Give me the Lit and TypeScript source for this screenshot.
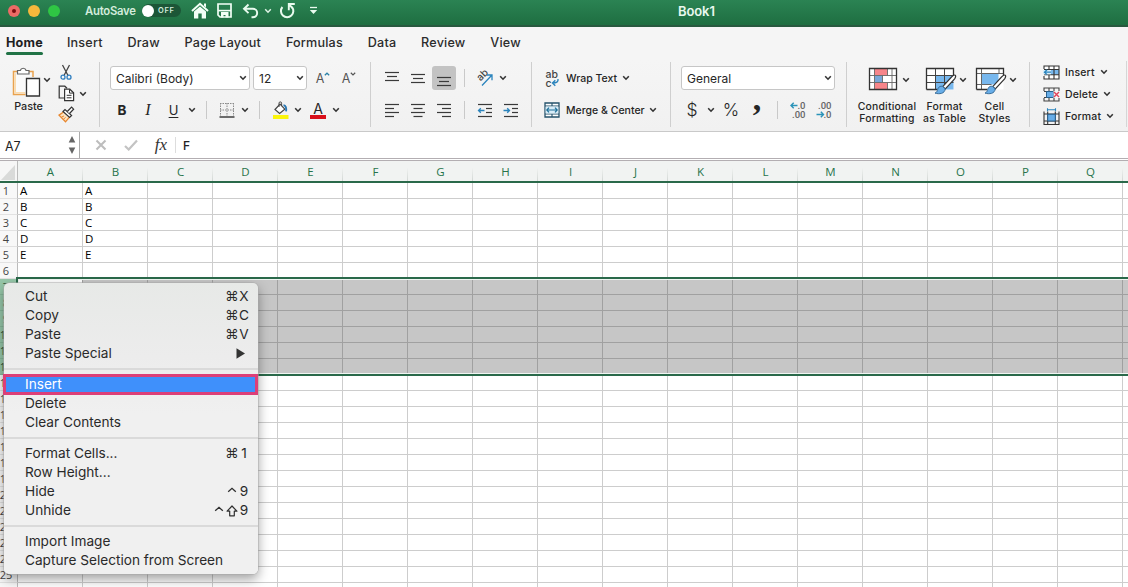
import { LitElement, html, css, svg, nothing } from "lit";
import { customElement, property } from "lit/decorators.js";
import { classMap } from "lit/directives/class-map.js";

const chev = html`<svg class="chev" width="8" height="6" viewBox="0 0 8 6"><path d="M1.2 1.3 4 4.2 6.8 1.3" fill="none" stroke="#333" stroke-width="1.6"/></svg>`;

const lines = (spec: [number, number, number][]) => svg`${spec.map(
  ([x1, x2, y]) => svg`<path d="M${x1} ${y}H${x2}" stroke="#3a3a3a" stroke-width="1.2"/>`
)}`;

const icon = (w: number, h: number, body: unknown) =>
  html`<svg width=${w} height=${h} viewBox="0 0 ${w} ${h}" fill="none">${body}</svg>`;

const brushTip = svg`<path d="M30.200 8.200c1 .8.500 2-.6 3.600L20.300 22l-2.600-2.400 8.800-9.600c1.400-1.400 2.800-2.400 3.700-1.800z" fill="#fff" stroke="#333" stroke-width="1.200"/><path d="M17.400 19.300c-4-.8-4.600 3-5.200 4.800-.4 1-1.300 1.700-2.200 2 4 1.300 10 .8 10.200-4.400z" fill="#67ade8" stroke="#3b6e99" stroke-width="1"/>`;

const icons = {
  home: icon(18, 17, svg`<path d="M1 9 9 1.8 17 9" stroke="#f2fff6" stroke-width="2"/><path d="M3 9.6 9 4.4l6 5.2V16.500h-4.300v-5H7.300v5H3z" fill="#f2fff6"/><path d="M13 1.500h2v4l-2-1.800z" fill="#f2fff6"/>`),
  save: icon(15, 15, svg`<path d="M1 1h13v13H3L1 12z" stroke="#f2fff6" stroke-width="1.700"/><path d="M1 7.600h13" stroke="#f2fff6" stroke-width="1.600"/><path d="M4 9h7.500v5.500H8.500v-2.500H6.500v2.500H4z" fill="#f2fff6"/>`),
  undo: icon(17, 16, svg`<path d="M6.500 1.500 2 5.800l4.500 4.300M2.500 5.800H11a4.200 4.200 0 0 1 0 8.400H9.500" stroke="#e9fbef" stroke-width="1.900"/>`),
  chevLight: icon(8, 6, svg`<path d="M1.200 1.300 4 4.200 6.800 1.300" stroke="#dff3e6" stroke-width="1.500"/>`),
  redo: icon(17, 17, svg`<path d="M3.400 5A6.200 6.200 0 1 0 13 5.100" stroke="#e9fbef" stroke-width="2"/><path d="M15.800 2H9.800v6.300M10 2.500l3.500 3.500" stroke="#e9fbef" stroke-width="1.900"/>`),
  more: icon(9, 9, svg`<path d="M1 1.500h7" stroke="#e9fbef" stroke-width="1.300"/><path d="M.8 4h7.400L4.500 8z" fill="#e9fbef"/>`),
  paste: icon(28, 32, svg`
    <path d="M6.500 5.500H1.500v23h12" stroke="#e9a24e" stroke-width="1.500"/><path d="M3.300 7.200v19.500h10" stroke="#fbdcae" stroke-width="1.600"/>
    <path d="M16 5.500h5V11" stroke="#e9a24e" stroke-width="1.500"/><path d="M4 7h15v5h-6v14H4z" fill="#fafafa"/>
    <path d="M5.500 8V4.500h2.800a3 3 0 0 1 5.800 0H17V8z" fill="#fff" stroke="#666" stroke-width="1.200"/>
    <path d="M14.500 12.500h13V30h-13z" fill="#fff" stroke="#333" stroke-width="1.300"/>`),
  cut: icon(12, 17, svg`<path d="M2.500 1 8 11.500M9.500 1 4 11.500" stroke="#444" stroke-width="1.300"/><circle cx="3" cy="13.200" r="2" stroke="#2f7ec0" stroke-width="1.300"/><circle cx="9" cy="13.200" r="2" stroke="#2f7ec0" stroke-width="1.300"/>`),
  copy: icon(17, 17, svg`<path d="M6 13H1.200V1.200h5.600L9 3.300" stroke="#333" stroke-width="1.200"/><path d="M6.600 4.200h5.200l3.800 3.600v7.800h-9z" fill="#fff" stroke="#333" stroke-width="1.200"/><path d="M11.500 4.500v3.600h4M8.700 10.300h4.800M8.700 12.800h4.800" stroke="#333" stroke-width="1"/>`),
  brush: icon(17, 17, svg`<path d="M5.500 6 1 9.200l6.500 6.600 3.800-4.500" fill="#fde3c0" stroke="#e8862d" stroke-width="1.300"/><path d="M3.500 11l2.500-1M5.500 13.300l2-2" stroke="#e8862d" stroke-width="1"/><path d="m5 5.500 2-2 6.600 6-2 2z" fill="#fff" stroke="#333" stroke-width="1.200"/><path d="m9.300 5.500 4.300-4.300 2 2L11.500 7.500" fill="#fff" stroke="#333" stroke-width="1.200"/>`),
  grow: icon(6, 4, svg`<path d="M.8 3.300 3 1.200l2.200 2.100" stroke="#2b82a8" stroke-width="1.200"/>`),
  shrink: icon(6, 4, svg`<path d="M.8.8 3 2.900 5.200.8" stroke="#555" stroke-width="1.200"/>`),
  borders: icon(16, 16, svg`<path d="M1.500 1v13M8 1v13M14.500 1v13M1 1.500h14M1 8h14" stroke="#8a8a8a" stroke-width="1" stroke-dasharray="1.500 1"/><path d="M.5 15h15" stroke="#333" stroke-width="1.400"/>`),
  fill: icon(17, 18, svg`<path d="M3 8.500 8 3.200l4.800 5L7.600 12.500z" fill="#fff" stroke="#444" stroke-width="1.200"/><path d="M7 6V2.200a1.300 1.300 0 0 1 2.600 0V5" stroke="#444" stroke-width="1"/><path d="M11.500 4.300c2.400.2 3 2.600 2.600 6" stroke="#2a78b5" stroke-width="1.900"/><path d="M1 14h15.500v4H1z" fill="#fbf50c"/>`),
  topAlign: icon(16, 16, lines([[1, 15, 2.500], [3, 13, 6.500], [1, 15, 10.500]])),
  midAlign: icon(16, 16, lines([[1, 15, 4.500], [3, 13, 8.500], [1, 15, 12.500]])),
  botAlign: icon(16, 16, lines([[1, 15, 7.500], [3, 13, 11.500], [1, 15, 15.500]])),
  left: icon(16, 16, lines([[1, 15, 2.500], [1, 10, 6.500], [1, 15, 10.500], [1, 10, 14.500]])),
  center: icon(16, 16, lines([[1, 15, 2.500], [3.500, 12.500, 6.500], [1, 15, 10.500], [3.500, 12.500, 14.500]])),
  right: icon(16, 16, lines([[1, 15, 2.500], [6, 15, 6.500], [1, 15, 10.500], [6, 15, 14.500]])),
  outdent: icon(16, 16, svg`${lines([[1, 15, 2.500], [9, 15, 6.500], [9, 15, 10.500], [1, 15, 14.500]])}<path d="M7.500 8.500H1.500M3.800 6.200 1.500 8.500l2.300 2.300" stroke="#2a84bd" stroke-width="1.300"/>`),
  indent: icon(16, 16, svg`${lines([[1, 15, 2.500], [9, 15, 6.500], [9, 15, 10.500], [1, 15, 14.500]])}<path d="M.5 8.500H6.500M4.200 6.200 6.500 8.500l-2.300 2.300" stroke="#2a84bd" stroke-width="1.300"/>`),
  orient: icon(18, 18, svg`<text x="0" y="0" transform="translate(4.500 12.500) rotate(-45)" font-family="Inter" font-size="10" fill="#444">ab</text><path d="M6 16.500 15.500 6.500M10.800 6H16v5.200" stroke="#2a84bd" stroke-width="1.300"/>`),
  wrap: icon(15, 17, svg`<text x="0.500" y="7.500" font-family="Inter" font-size="10.500" fill="#444">ab</text><text x="0.500" y="16.500" font-family="Inter" font-size="10.500" fill="#444">c</text><path d="M13 9c.5 3-1.500 4-5.500 4M10.300 10.300 7.500 13l2.800 2.800" stroke="#2a84bd" stroke-width="1.400"/>`),
  merge: icon(16, 16, svg`<path d="M1 1h14v14H1z" fill="#fff" stroke="#24526b" stroke-width="1.300"/><path d="M1 4h14M1 12h14M8 1v3M8 12v3" stroke="#24526b" stroke-width="1.100"/><path d="M1.700 4.600h12.600v6.800H1.700z" fill="#d8edf9"/><path d="M2.800 8h10.400M5 5.700 2.800 8 5 10.300M11 5.700 13.200 8 11 10.300" stroke="#1d7099" stroke-width="1.200"/>`),
  incDec: icon(18, 18, svg`<path d="M8.500 4.500H2M4.700 1.700 2 4.500l2.700 2.800" stroke="#2b93b8" stroke-width="1.400"/><text x="16.500" y="8" text-anchor="end" font-family="Roboto" font-size="9.500" fill="#666">.0</text><text x="16.500" y="17" text-anchor="end" font-family="Roboto" font-size="9.500" fill="#666">.00</text>`),
  decDec: icon(18, 18, svg`<path d="M1.500 13.500H8.500M5.800 10.700 8.500 13.500l-2.700 2.800" stroke="#2b93b8" stroke-width="1.400"/><text x="16.500" y="8" text-anchor="end" font-family="Roboto" font-size="9.500" fill="#666">.00</text><text x="16.500" y="17" text-anchor="end" font-family="Roboto" font-size="9.500" fill="#666">.0</text>`),
  cond: icon(30, 24, svg`<path d="M1.500 1.500h27v21h-27z" fill="#fff"/><path d="M6.500 1.500h13v7h-13zM6.500 15.500h12.500v7H6.500z" fill="#f6858a"/><path d="M6.500 8.500h8v7h-8z" fill="#7aa7d8"/><path d="M14.500 8.500v7M6.500 1.500v21M19.500 1.500v7M19.500 15.500v7M24 1.500v21M1.500 8.500h27M1.500 15.500h27" stroke="#666" stroke-width=".9"/><path d="M1.500 1.500h27v21h-27z" stroke="#333" stroke-width="1.300"/>`),
  table: icon(32, 28, svg`<path d="M1.500 1.500h27v21h-27z" fill="#fff"/><path d="M10.500 8.500h18v14h-18z" fill="#78b8ee"/><path d="M10.500 1.500v21M19.500 1.500v21M1.500 8.500h27M1.500 15.500h27" stroke="#444" stroke-width="1"/><path d="M1.500 22.500v-21h27v8M1.500 22.500h11" stroke="#333" stroke-width="1.300"/>${brushTip}`),
  styles: icon(32, 28, svg`<path d="M1.500 1.500h27v21h-27z" fill="#fff"/><path d="M6.500 6.500h17v11h-17z" fill="#78b8ee"/><path d="M6.500 1.500v21M24 1.500v5M1.500 6.500h27M1.500 17.500h15" stroke="#666" stroke-width="1"/><path d="M1.500 22.500v-21h27v8M1.500 22.500h11" stroke="#333" stroke-width="1.300"/>${brushTip}`),
  insCell: icon(17, 15, svg`<path d="M1 1h15v13H1z" fill="#fff"/><path d="M7 4.500h9v5H7z" fill="#78b8ee"/><path d="M1 4V1h15v13H1v-3M1 4.500h15M1 9.800h15M6 1v3M6 10v4M11 1v13" stroke="#333" stroke-width="1.100"/><path d="M0 5h8v4.300H0z" fill="#d8effc"/><path d="M8 7.200H1.500M4 4.800 1.500 7.200 4 9.600" stroke="#2a84bd" stroke-width="1.300"/>`),
  delCell: icon(17, 15, svg`<path d="M1 4V1h15v3M1 11v3h15v-3M1 4.500h15M1 10.500h15M6 1v3M6 10v4M11 1v3M11 10v4" stroke="#444" stroke-width="1.100"/><path d="M3.500 4.500h7v6h-7z" fill="#67ade8" stroke="#28618f"/><path d="M10.500 4h6v7h-6z" fill="#f4f4f4"/><path d="m11 5 5 5M16 5l-5 5" stroke="#e0425a" stroke-width="1.400"/>`),
  fmtCell: icon(17, 17, svg`<path d="M1 3.500v13h15v-13M4.700 3.500v13M12.300 3.500v13M1 6h15M1 13h15" stroke="#333" stroke-width="1.100"/><path d="M4.700 6.300h7.600V13H4.700z" fill="#67ade8" stroke="#28618f"/><path d="M4.500 1.800h8M4.500.3v3M12.500.3v3" stroke="#2a84bd" stroke-width="1.100"/>`),
  cancel: icon(12, 12, svg`<path d="m1.500 1.500 9 9M10.500 1.500l-9 9" stroke="#bdbdbd" stroke-width="2.100"/>`),
  accept: icon(14, 12, svg`<path d="m1 7 3.700 3.500L13 1.500" stroke="#c3c3c3" stroke-width="2.200"/>`),
  stepper: icon(8, 18, svg`<path d="M4 0 7.300 6.500H.7zM4 18l3.300-6.500H.7z" fill="#666"/>`),
  corner: icon(14, 15, svg`<path d="M14 0v15H0z" fill="#d9dad9"/>`),
  arrow: icon(9, 11, svg`<path d="M.5.300 9 5.500l-8.500 5.200z" fill="#333"/>`),
  ctrl: icon(12, 14, svg`<path d="M2.200 6.800 6 3.300l3.800 3.500" stroke="#2f2f2f" stroke-width="1.300"/>`),
  shift: icon(12, 14, svg`<path d="M6 2 10.900 7.200H8.300v4.600H3.700V7.200H1.100z" stroke="#2f2f2f" stroke-width="1.200" stroke-linejoin="round"/>`),
};

@customElement("title-bar")
class TitleBar extends LitElement {
  static styles = css`
    :host { display: grid; grid-template-columns: 4px 20px 20px 20px 21px 57px 46px 24px 25px 27px 8px 31px 20px 1fr;
      align-items: center; height: 27px; padding-bottom: 4px; box-sizing: border-box;
      background: linear-gradient(#2b8353, #1e6e41); border-bottom: 2px solid #28593f;
      font: 600 11.5px Inter, sans-serif; color: #d3ecdc; }
    svg { display: block; margin: auto; }
    .dot { width: 12px; height: 12px; border-radius: 50%; margin: auto; display: grid; place-items: center; }
    .red { background: #ec6b66; } .yellow { background: #f5b83c; } .green { background: #2fc644; }
    .red::after { content: ""; width: 4px; height: 4px; border-radius: 50%; background: #7c0d10; }
    .switch { width: 39px; height: 13px; border-radius: 7px; background: #1c5637; display: flex; align-items: center; gap: 4px;
      font-size: 7.5px; letter-spacing: .7px; }
    .knob { width: 12px; height: 12px; border-radius: 50%; background: #fff; }
    .auto { letter-spacing: -.25px; white-space: nowrap; font-size: 11.3px; }
    .title { color: #e9f8ee; font-size: 13px; letter-spacing: -.1px; padding-left: 355px; }
  `;
  render() {
    return html`<span></span><span class="dot red"></span><span class="dot yellow"></span><span class="dot green"></span><span></span>
      <span class="auto">AutoSave</span>
      <span class="switch"><span class="knob"></span>OFF</span>
      ${icons.home}${icons.save}${icons.undo}${icons.chevLight}${icons.redo}${icons.more}
      <span class="title">Book1</span>`;
  }
}

@customElement("ribbon-tabs")
class RibbonTabs extends LitElement {
  static styles = css`
    :host { display: flex; gap: 24.8px; height: 33px; padding-left: 6px; box-sizing: border-box;
      background: #f5f5f5; font: 500 12.6px Inter, sans-serif; color: #2c2c2c; }
    .tab { padding-top: 8px; line-height: 16px; letter-spacing: .2px; white-space: nowrap; }
    .active { font-weight: 700; color: #1e1e1e; margin-right: -.8px; }
    .active::after { content: ""; display: block; height: 3px; margin-top: 1px; border-radius: 2px; background: #217346; }
  `;
  render() {
    const tabs = ["Home", "Insert", "Draw", "Page Layout", "Formulas", "Data", "Review", "View"];
    return tabs.map((t, i) => html`<span class=${classMap({ tab: true, active: i === 0 })}>${t}</span>`);
  }
}

@customElement("ribbon-bar")
class RibbonBar extends LitElement {
  static styles = css`
    :host { display: grid; grid-template-columns: 100px 271px 161px 139px 176px 183px 97px 1px; height: 71px; padding: 2px 0 8px;
      box-sizing: border-box; background: linear-gradient(#f5f5f5, #f1f1f1);
      font: 500 10.5px Inter, sans-serif; color: #262626; }
    svg { display: block; margin: auto; overflow: visible; }
    .group { border-right: 1px solid #cfcfcf; padding-top: 4px; display: grid; grid-template-rows: 24px 24px; row-gap: 8px; }
    .row { display: grid; align-items: center; text-align: center; white-space: nowrap; }
    .select { height: 24px; box-sizing: border-box; border: 1px solid #c6c6c6; border-radius: 3px; background: #fff; display: grid;
      grid-template-columns: 1fr 13px; align-items: center; padding-left: 5px; text-align: left; font: 400 12px Inter, sans-serif; }
    .vsep { width: 1px; height: 18px; background: #c9c9c9; margin: auto; }
    .clip { grid-template: 60px / 7px 43px 32px 3px; padding-top: 0; }
    .paste { padding-top: 2px; display: grid; grid-template: 36px 16px / 1fr; text-align: center; font-size: 10.8px; }
    .paste-line { display: grid; grid-template-columns: 37px 6px; margin-top: -1px; }
    .paste-line .chev { margin: 14px 0 0 -1px; }
    .clip-tools { display: grid; grid-template-rows: 21px 21px 21px; align-items: center; }
    .clip-tools .chev { margin-left: -3px; }
    .font1 { grid-template-columns: 10px 140px 3px 54px 3px 26px 26px; }
    .font2 { grid-template-columns: 9px 26px 26px 25px 12px 16px 25px 12px 17px 24px 12px 28px 8px; }
    .fs { display: flex; justify-content: center; font-size: 12.5px; color: #555; font-weight: 400; }
    .fs svg { margin: 1px 0 0; }
    .big { font-size: 13.5px; } .b { font-weight: 700; } .i { font-family: "Liberation Serif", serif; font-style: italic; font-size: 16px; font-weight: 400; }
    .u { font-weight: 400; font-size: 13px; text-decoration: underline; text-underline-offset: 2px; }
    .fc { font-weight: 400; font-size: 14px; line-height: 13px; border-bottom: 4px solid #d8101a; width: 16px; margin: 0 auto; }
    .align { grid-template-columns: 8px 26px 26px 26px 14px 28px 8px; }
    .align2 { grid-template-columns: 8px 26px 26px 26px 14px 28px 24px; }
    .on { background: #c3c3c3; border-radius: 3px; height: 24px; width: 24px; margin: auto; display: grid; }
    .wraps { grid-template-columns: 11px 18px 5px auto 17px; justify-content: start; }
    .general { grid-template-columns: 10px 154px; }
    .num { grid-template-columns: 8px 26px 12px 28px 24px 16px 26px 26px; }
    .sym { font-size: 17.5px; font-weight: 300; line-height: 24px; }
    .comma { font: 700 34px/20px "Liberation Serif", serif; height: 24px; margin-top: -18px; }
    .styles { grid-template: 62px / 11px 58px 57px 43px; row-gap: 0; padding-top: 0; }
    .style { display: grid; grid-template: 39px 12px 12px / minmax(0, 1fr); text-align: center; line-height: 12px; font-size: 10.4px; letter-spacing: .2px; justify-items: center; white-space: nowrap; }
    .style-top { display: grid; grid-template-columns: 30px 16px; margin-left: 7px; padding-top: 5px; height: 31px; align-items: start; justify-items: start; }
    .style-top svg { margin: 0; }
    .style-top .chev { margin: 10px 0 0 4px; }
    .cells { grid-template-rows: 22px 22px 22px; row-gap: 0; padding-top: 0; margin-top: -1px; height: 66px; border-right-color: #d6d6d6; }
    .cell { grid-template-columns: 12px 18px 5px auto 18px; justify-content: start; letter-spacing: .15px; font-size: 10.5px; }
  `;
  render() {
    const g = html`<span></span>`;
    const style = (ic: unknown, a: string, b: string) =>
      html`<div class="style"><div class="style-top">${ic}${chev}</div><span>${a}</span><span>${b}</span></div>`;
    const cell = (ic: unknown, t: string) => html`<div class="row cell">${g}${ic}${g}<span>${t}</span>${chev}</div>`;
    return html`
      <div class="group clip">${g}
        <div class="paste"><div class="paste-line">${icons.paste}${chev}</div><span>Paste</span></div>
        <div class="clip-tools">${icons.cut}${icons.copy}${icons.brush}</div>
        <div class="clip-tools">${g}${chev}${g}</div>
      </div>
      <div class="group">
        <div class="row font1">${g}<div class="select"><span>Calibri (Body)</span>${chev}</div>${g}<div class="select"><span>12</span>${chev}</div>${g}
          <span class="fs">A${icons.grow}</span><span class="fs">A${icons.shrink}</span></div>
        <div class="row font2">${g}<span class="big b">B</span><span class="i">I</span><span class="u">U</span>${chev}<span class="vsep"></span>
          ${icons.borders}${chev}<span class="vsep"></span>${icons.fill}${chev}<div class="fc">A</div>${chev}</div>
      </div>
      <div class="group">
        <div class="row align">${g}${icons.topAlign}${icons.midAlign}<span class="on">${icons.botAlign}</span><span class="vsep"></span>${icons.orient}${chev}</div>
        <div class="row align2">${g}${icons.left}${icons.center}${icons.right}<span class="vsep"></span>${icons.outdent}${icons.indent}</div>
      </div>
      <div class="group">
        <div class="row wraps">${g}${icons.wrap}${g}<span>Wrap Text</span>${chev}</div>
        <div class="row wraps">${g}${icons.merge}${g}<span>Merge &amp; Center</span>${chev}</div>
      </div>
      <div class="group">
        <div class="row general">${g}<div class="select"><span>General</span>${chev}</div></div>
        <div class="row num">${g}<span class="sym">$</span>${chev}<span class="sym">%</span><span class="comma">,</span><span class="vsep"></span>${icons.incDec}${icons.decDec}</div>
      </div>
      <div class="group styles">${g}
        ${style(icons.cond, "Conditional", "Formatting")}${style(icons.table, "Format", "as Table")}${style(icons.styles, "Cell", "Styles")}
      </div>
      <div class="group cells">${cell(icons.insCell, "Insert")}${cell(icons.delCell, "Delete")}${cell(icons.fmtCell, "Format")}</div>`;
  }
}

@customElement("formula-bar")
class FormulaBar extends LitElement {
  static styles = css`
    :host { display: grid; grid-template-columns: 64px 15px 1px 41px 19px 42px 1fr; align-items: center; height: 30px;
      box-sizing: border-box; border-top: 1px solid #c9c9c9; border-bottom: 3px double #b3aeb2; background: #fff;
      font: 500 12px Inter, sans-serif; color: #222; }
    svg { display: block; margin: auto; }
    .name { padding: 2px 0 0 5px; font-size: 12.5px; font-weight: 400; } .rule { height: 26px; background: #aaa; }
    .fx { font: italic 17px "Liberation Serif", serif; text-align: center; color: #333; }
    .value { display: flex; align-items: center; }
    .value::before { content: ""; height: 16px; width: 1px; background: #ddd; margin: 0 7px 0 -7px; }
  `;
  render() {
    return html`<span class="name">A7</span>${icons.stepper}<span class="rule"></span>${icons.cancel}${icons.accept}<span class="fx">fx</span>
      <span class="value">F</span>`;
  }
}

@customElement("work-sheet")
class WorkSheet extends LitElement {
  static styles = css`
    :host { display: block; position: relative; height: 426px; overflow: hidden; background: #fff; font: 400 11.500px "Open Sans", sans-serif; color: #000; }
    .row { display: grid; grid-template: 16px / 18px repeat(18, 65px); height: 16px; }
    .head { grid-template-rows: 20px; height: 22px; background: #f1f3f2; color: #27744a; font-size: 11.500px; box-sizing: border-box; border-bottom: 2px solid #2a694a; }
    .head span { text-align: center; line-height: 22px; box-sizing: border-box; padding-left: 1px; border-right: 1px solid; border-image: linear-gradient(transparent 35%, #cfd4d1) 1; }
    .head .corner { display: grid; place-items: end; padding: 0 2px 1px 0; line-height: 0; border-right: 1px solid #bbb; border-image: none; background: #f6f6f6; }
    .cell { box-sizing: border-box; border-right: 1px solid #cdcdcd; border-bottom: 1px solid #cdcdcd; padding-left: 2px; line-height: 16px; }
    .num { box-sizing: border-box; border-right: 1px solid #bbb; border-bottom: 1px solid #e2e2e2; padding-right: 5px; display: flex; justify-content: center; line-height: 16px; background: #f8f8f8; color: #444; font-size: 11px; }
    .sel .cell { background: #c6c6c6; border-color: #a0a0a0; }
    .sel .cell.cursor { background: #fff; }
    .sel .num { background: #95c6a8; border-color: #85b698; color: #1f4a33; }
    .range { position: absolute; left: 16px; top: 116px; width: 1200px; height: 95px; border: 2px solid #2a694a; box-shadow: inset 0 0 0 1px #f0f5f2; }
  `;
  render() {
    const cols = [..."ABCDEFGHIJKLMNOPQ", ""];
    const data = ["A", "B", "C", "D", "E"];
    return html`
      <div class="row head"><span class="corner">${icons.corner}</span>${cols.map((c) => html`<span>${c}</span>`)}</div>
      ${Array.from({ length: 26 }, (_, r) => {
        const sel = r >= 6 && r <= 11;
        return html`<div class=${classMap({ row: true, sel })}><div class="num">${r < 25 ? r + 1 : nothing}</div>
          ${cols.map((_c, i) => html`<div class=${classMap({ cell: true, cursor: r === 6 && i === 0 })}>${i < 2 && data[r] ? data[r] : nothing}</div>`)}</div>`;
      })}
      <div class="range"></div>`;
  }
}

type Item = { label: string; keys?: string; mods?: string[]; sub?: boolean; hot?: boolean };

@customElement("context-menu")
class ContextMenu extends LitElement {
  @property({ attribute: false }) groups: Item[][] = [];
  static styles = css`
    :host { display: block; width: 254px; height: 291px; box-sizing: border-box; padding: 4px 0; border-radius: 5px;
      background: linear-gradient(#e7e9e7, #ececec 25%, #f0f0f0 45%); box-shadow: 0 0 0 .5px #aaa, 0 5px 12px rgba(0, 0, 0, .38);
      font: 400 13.650px Inter, sans-serif; color: #2a2a2a; }
    .item { height: 19px; line-height: 19px; padding: 0 8px 0 21px; display: flex; justify-content: space-between; align-items: center; white-space: nowrap; }
    .hot { background: #3f90fb; color: #fff; outline: 3px solid #dc3f78; outline-offset: -2px; margin-right: 1px; }
    .rule { height: 2px; margin: 5px 0; background: #dadada; }
    .keys { display: flex; align-items: center; }
    .key { width: 12px; text-align: center; }
    .mod { width: 13px; text-align: center; font-family: "DejaVu Sans", sans-serif; font-size: 13.5px; display: grid; place-items: center; }
    .sub { padding-right: 5px; line-height: 0; }
  `;
  private mod(name: string) {
    return html`<span class="mod">${name === "ctrl" ? icons.ctrl : name === "shift" ? icons.shift : "⌘"}</span>`;
  }
  render() {
    return this.groups.map((g, i) => html`${i ? html`<div class="rule"></div>` : nothing}
      ${g.map((m) => html`<div class=${classMap({ item: true, hot: !!m.hot })}><span>${m.label}</span>
        ${m.sub ? html`<span class="sub">${icons.arrow}</span>` : m.keys
          ? html`<span class="keys">${m.mods?.map((k) => this.mod(k))}<span class="key">${m.keys}</span></span>` : nothing}</div>`)}`);
  }
}

@customElement("app-root")
class AppRoot extends LitElement {
  static styles = css`
    :host { display: block; width: 1128px; height: 587px; overflow: hidden; position: relative; background: #fff; }
    .menu { position: absolute; left: 4px; top: 283px; }
  `;
  private groups: Item[][] = [
    [{ label: "Cut", mods: ["cmd"], keys: "X" }, { label: "Copy", mods: ["cmd"], keys: "C" }, { label: "Paste", mods: ["cmd"], keys: "V" }, { label: "Paste Special", sub: true }],
    [{ label: "Insert", hot: true }, { label: "Delete" }, { label: "Clear Contents" }],
    [{ label: "Format Cells...", mods: ["cmd"], keys: "1" }, { label: "Row Height..." }, { label: "Hide", mods: ["ctrl"], keys: "9" }, { label: "Unhide", mods: ["ctrl", "shift"], keys: "9" }],
    [{ label: "Import Image" }, { label: "Capture Selection from Screen" }],
  ];
  render() {
    return html`<title-bar></title-bar><ribbon-tabs></ribbon-tabs><ribbon-bar></ribbon-bar><formula-bar></formula-bar><work-sheet></work-sheet>
      <context-menu class="menu" .groups=${this.groups}></context-menu>`;
  }
}
